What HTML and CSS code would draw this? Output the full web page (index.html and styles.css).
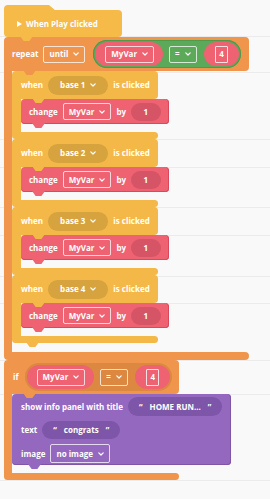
FILE: index.html
```html
<!DOCTYPE html>
<html>
<head>
<meta charset="utf-8">
<link rel="stylesheet" href="styles.css">
</head>
<body>
<div class="canvas">
  <div class="hat">
    <svg class="play" width="5" height="6" viewBox="0 0 5 6"><polygon points="0,0 5,3 0,6" fill="#fff"/></svg>
    <span>When Play clicked</span>
    <i class="tab"></i>
  </div>

  <div class="cblock orange repeat">
    <div class="chead repeat-head">
      <span>repeat</span>
      <span class="dd">until<svg class="chev" width="6" height="4" viewBox="0 0 6 4"><path d="M0.8 0.8L3 3L5.2 0.8"/></svg></span>
      <span class="bool green">
        <span class="vpill"><span class="dd">MyVar<svg class="chev" width="6" height="4" viewBox="0 0 6 4"><path d="M0.8 0.8L3 3L5.2 0.8"/></svg></span></span>
        <span class="dd op">=<svg class="chev" width="6" height="4" viewBox="0 0 6 4"><path d="M0.8 0.8L3 3L5.2 0.8"/></svg></span>
        <span class="vpill num"><span class="numbox">4</span></span>
      </span>
      <i class="tab"></i>
    </div>
    <div class="cbody">
      <div class="carm"></div>
      <div class="cinner">

        <div class="cblock yellow">
          <div class="chead when-head">
            <span>when</span>
            <span class="pill dkyellow">base 1<svg class="chev" width="6" height="4" viewBox="0 0 6 4"><path d="M0.8 0.8L3 3L5.2 0.8"/></svg></span>
            <span>is clicked</span>
            <i class="tab"></i>
          </div>
          <div class="cbody">
            <div class="carm"></div>
            <div class="cinner">
              <div class="stmt red">
                <span>change</span>
                <span class="dd">MyVar<svg class="chev" width="6" height="4" viewBox="0 0 6 4"><path d="M0.8 0.8L3 3L5.2 0.8"/></svg></span>
                <span>by</span>
                <span class="pill dkred">1</span>
                <i class="tab"></i>
              </div>
            </div>
          </div>
          <div class="cfoot"><i class="tab"></i></div>
        </div>

        <div class="cblock yellow">
          <div class="chead when-head">
            <span>when</span>
            <span class="pill dkyellow">base 2<svg class="chev" width="6" height="4" viewBox="0 0 6 4"><path d="M0.8 0.8L3 3L5.2 0.8"/></svg></span>
            <span>is clicked</span>
            <i class="tab"></i>
          </div>
          <div class="cbody">
            <div class="carm"></div>
            <div class="cinner">
              <div class="stmt red">
                <span>change</span>
                <span class="dd">MyVar<svg class="chev" width="6" height="4" viewBox="0 0 6 4"><path d="M0.8 0.8L3 3L5.2 0.8"/></svg></span>
                <span>by</span>
                <span class="pill dkred">1</span>
                <i class="tab"></i>
              </div>
            </div>
          </div>
          <div class="cfoot"><i class="tab"></i></div>
        </div>

        <div class="cblock yellow">
          <div class="chead when-head">
            <span>when</span>
            <span class="pill dkyellow">base 3<svg class="chev" width="6" height="4" viewBox="0 0 6 4"><path d="M0.8 0.8L3 3L5.2 0.8"/></svg></span>
            <span>is clicked</span>
            <i class="tab"></i>
          </div>
          <div class="cbody">
            <div class="carm"></div>
            <div class="cinner">
              <div class="stmt red">
                <span>change</span>
                <span class="dd">MyVar<svg class="chev" width="6" height="4" viewBox="0 0 6 4"><path d="M0.8 0.8L3 3L5.2 0.8"/></svg></span>
                <span>by</span>
                <span class="pill dkred">1</span>
                <i class="tab"></i>
              </div>
            </div>
          </div>
          <div class="cfoot"><i class="tab"></i></div>
        </div>

        <div class="cblock yellow">
          <div class="chead when-head">
            <span>when</span>
            <span class="pill dkyellow">base 4<svg class="chev" width="6" height="4" viewBox="0 0 6 4"><path d="M0.8 0.8L3 3L5.2 0.8"/></svg></span>
            <span>is clicked</span>
            <i class="tab"></i>
          </div>
          <div class="cbody">
            <div class="carm"></div>
            <div class="cinner">
              <div class="stmt red">
                <span>change</span>
                <span class="dd">MyVar<svg class="chev" width="6" height="4" viewBox="0 0 6 4"><path d="M0.8 0.8L3 3L5.2 0.8"/></svg></span>
                <span>by</span>
                <span class="pill dkred">1</span>
                <i class="tab"></i>
              </div>
            </div>
          </div>
          <div class="cfoot"><i class="tab"></i></div>
        </div>

      </div>
    </div>
    <div class="cfoot"><i class="tab"></i></div>
  </div>

  <div class="cblock orange ifblock">
    <div class="chead if-head">
      <span>if</span>
      <span class="bool dkorange">
        <span class="vpill"><span class="dd">MyVar<svg class="chev" width="6" height="4" viewBox="0 0 6 4"><path d="M0.8 0.8L3 3L5.2 0.8"/></svg></span></span>
        <span class="dd op">=<svg class="chev" width="6" height="4" viewBox="0 0 6 4"><path d="M0.8 0.8L3 3L5.2 0.8"/></svg></span>
        <span class="vpill num"><span class="numbox">4</span></span>
      </span>
      <i class="tab"></i>
    </div>
    <div class="cbody">
      <div class="carm"></div>
      <div class="cinner">
        <div class="info purple">
          <div class="row">
            <span>show info panel with title</span>
            <span class="pill dkpurple"><span>“</span>HOME RUN...<span>”</span></span>
          </div>
          <div class="row row2">
            <span>text</span>
            <span class="pill dkpurple"><span>“</span>congrats<span>”</span></span>
          </div>
          <div class="row">
            <span>image</span>
            <span class="dd img">no image<svg class="chev" width="6" height="4" viewBox="0 0 6 4"><path d="M0.8 0.8L3 3L5.2 0.8"/></svg></span>
          </div>
          <i class="tab"></i>
        </div>
      </div>
    </div>
    <div class="cfoot"><i class="tab"></i></div>
  </div>
</div>
</body>
</html>
```
FILE: styles.css
```css
html {
  height: 100%;
  background-color: #f9f9f9;
  background-image: linear-gradient(to bottom,
    transparent 36px, #ebebeb 36px 37px,
    transparent 37px 72px, #ebebeb 72px 73px,
    transparent 73px 139px, #ebebeb 139px 140px,
    transparent 140px 167px, #ebebeb 167px 168px,
    transparent 168px 207px, #ebebeb 207px 208px,
    transparent 208px 235px, #ebebeb 235px 236px,
    transparent 236px 276px, #ebebeb 276px 277px,
    transparent 277px 303px, #ebebeb 303px 304px,
    transparent 304px 360px, #ebebeb 360px 361px,
    transparent 361px 394px, #ebebeb 394px 395px,
    transparent 395px 480px, #ebebeb 480px 481px,
    transparent 481px);
}

body {
  margin: 0;
  font-family: "Open Sans", "Noto Sans", sans-serif;
  font-weight: 700;
  font-size: 8px;
  line-height: 1;
  color: #fff;
  white-space: nowrap;
}

.canvas {
  padding-left: 4px;
  display: flex;
  flex-direction: column;
  align-items: flex-start;
}

/* colours */
.orange { --c: #f0964c; }
.yellow { --c: #f3b847; }
.red { --c: #ee6272; }
.purple { --c: #9468be; }

.chev {
  display: block;
  flex: none;
}
.chev path {
  fill: none;
  stroke: #fff;
  stroke-width: 1.2;
  stroke-linecap: round;
  stroke-linejoin: round;
}

/* puzzle tab under a block */
.tab {
  position: absolute;
  z-index: 2;
  left: 11px;
  bottom: -4px;
  width: 13px;
  height: 5px;
  background: var(--c);
  clip-path: polygon(0 0, 100% 0, 72% 100%, 28% 100%);
}

/* hat block */
.hat {
  --c: #f5ba47;
  position: relative;
  margin-top: 10px;
  height: 27px;
  box-sizing: border-box;
  display: flex;
  align-items: center;
  gap: 4px;
  padding: 0 24px 0 13px;
  background: var(--c);
  border-radius: 0 4px 4px 4px;
}
.hat::before {
  content: "";
  position: absolute;
  left: 0;
  top: -5px;
  width: 52px;
  height: 6px;
  background: var(--c);
  border-radius: 4px 0 0 0;
  clip-path: polygon(0 0, 45px 0, 52px 100%, 0 100%);
}
.hat .tab { left: 16px; }
.play { display: block; }

/* C blocks */
.cblock {
  --arm: 8px;
  position: relative;
  display: flex;
  flex-direction: column;
  width: max-content;
  flex: none;
}
.yellow.cblock { --arm: 9px; }

.chead {
  position: relative;
  display: flex;
  align-items: center;
  gap: 5px;
  box-sizing: border-box;
  background: var(--c);
  border-radius: 4px 4px 4px 0;
}
.chead > * { flex: none; }
.chead > .tab { left: calc(var(--arm) + 11px); }

.repeat-head {
  height: 34px;
  padding: 0 8px;
}
.when-head {
  height: 28px;
  padding: 0 8px 0 9px;
}
.if-head {
  height: 34px;
  padding: 0 7px 0 9px;
}

.cbody {
  display: flex;
  width: 0;
  min-width: 100%;
}
.carm {
  width: var(--arm);
  flex: none;
  background: var(--c);
}
.cinner {
  flex: none;
  display: flex;
  flex-direction: column;
  align-items: flex-start;
  padding-bottom: 8px;
}
.cinner > * { flex: none; }
.repeat > .cbody > .cinner { padding-bottom: 9px; }

.cfoot {
  position: relative;
  height: 7px;
  background: var(--c);
  border-radius: 0 4px 4px 4px;
}
.repeat > .cfoot { height: 8px; }
.cfoot > .tab { left: 14px; }

/* fields */
.dd {
  flex: none;
  display: flex;
  align-items: center;
  gap: 5px;
  height: 17px;
  box-sizing: border-box;
  padding: 0 5px;
  border: 1px solid rgba(255, 255, 255, 0.75);
  border-radius: 2px;
}

.pill {
  flex: none;
  display: flex;
  align-items: center;
  gap: 5px;
  height: 19px;
  box-sizing: border-box;
  border-radius: 10px;
}
.dkyellow {
  background: #d6a33f;
  padding: 0 12px;
}
.dkred {
  background: #d55566;
  height: 18px;
  padding: 0 12.5px;
}
.dkpurple {
  background: #7e56a9;
  padding: 0 11px;
  gap: 7px;
}

/* boolean compare */
.bool {
  flex: none;
  display: flex;
  align-items: center;
  height: 28px;
  box-sizing: border-box;
  padding: 0 2px;
  border-radius: 14px;
  margin-left: 3px;
}
.bool > * { flex: none; }
.green {
  background: #5ba959;
  box-shadow: inset 0 0 0 1px #4d9a4b;
}
.dkorange {
  background: #dc8840;
  margin-left: 1px;
}
.vpill {
  display: flex;
  align-items: center;
  height: 24px;
  box-sizing: border-box;
  padding: 0 9px 0 10px;
  border-radius: 12px;
  background: #ee6272;
}
.vpill.num {
  padding: 0 11px 0 11.5px;
}
.op { margin: 0 7px 0 6px; }
.numbox {
  display: flex;
  align-items: center;
  height: 17px;
  box-sizing: border-box;
  padding: 0 3px;
  border: 1px solid rgba(255, 255, 255, 0.8);
  border-radius: 1px;
}

/* statement blocks */
.stmt {
  position: relative;
  display: flex;
  align-items: center;
  gap: 5px;
  height: 25px;
  box-sizing: border-box;
  padding: 0 8px;
  background: var(--c);
  border-radius: 4px;
  box-shadow: inset 0 -1px 0 #d9495b, inset -1px 0 0 #d9495b;
}
.stmt > * { flex: none; }

.info {
  position: relative;
  display: flex;
  flex-direction: column;
  align-items: flex-start;
  gap: 5px;
  padding: 3px 9px 2px;
  background: var(--c);
  border-radius: 4px;
  box-shadow: inset 0 -1px 0 #7f55a8, inset -1px 0 0 #7f55a8;
}
.info > .tab { left: 16px; }
.row {
  display: flex;
  align-items: center;
  gap: 5px;
  height: 19px;
}
.row > * { flex: none; }
.row2 { height: 18px; }
.row2 .pill { height: 18px; }
.img { height: 19px; }
```
